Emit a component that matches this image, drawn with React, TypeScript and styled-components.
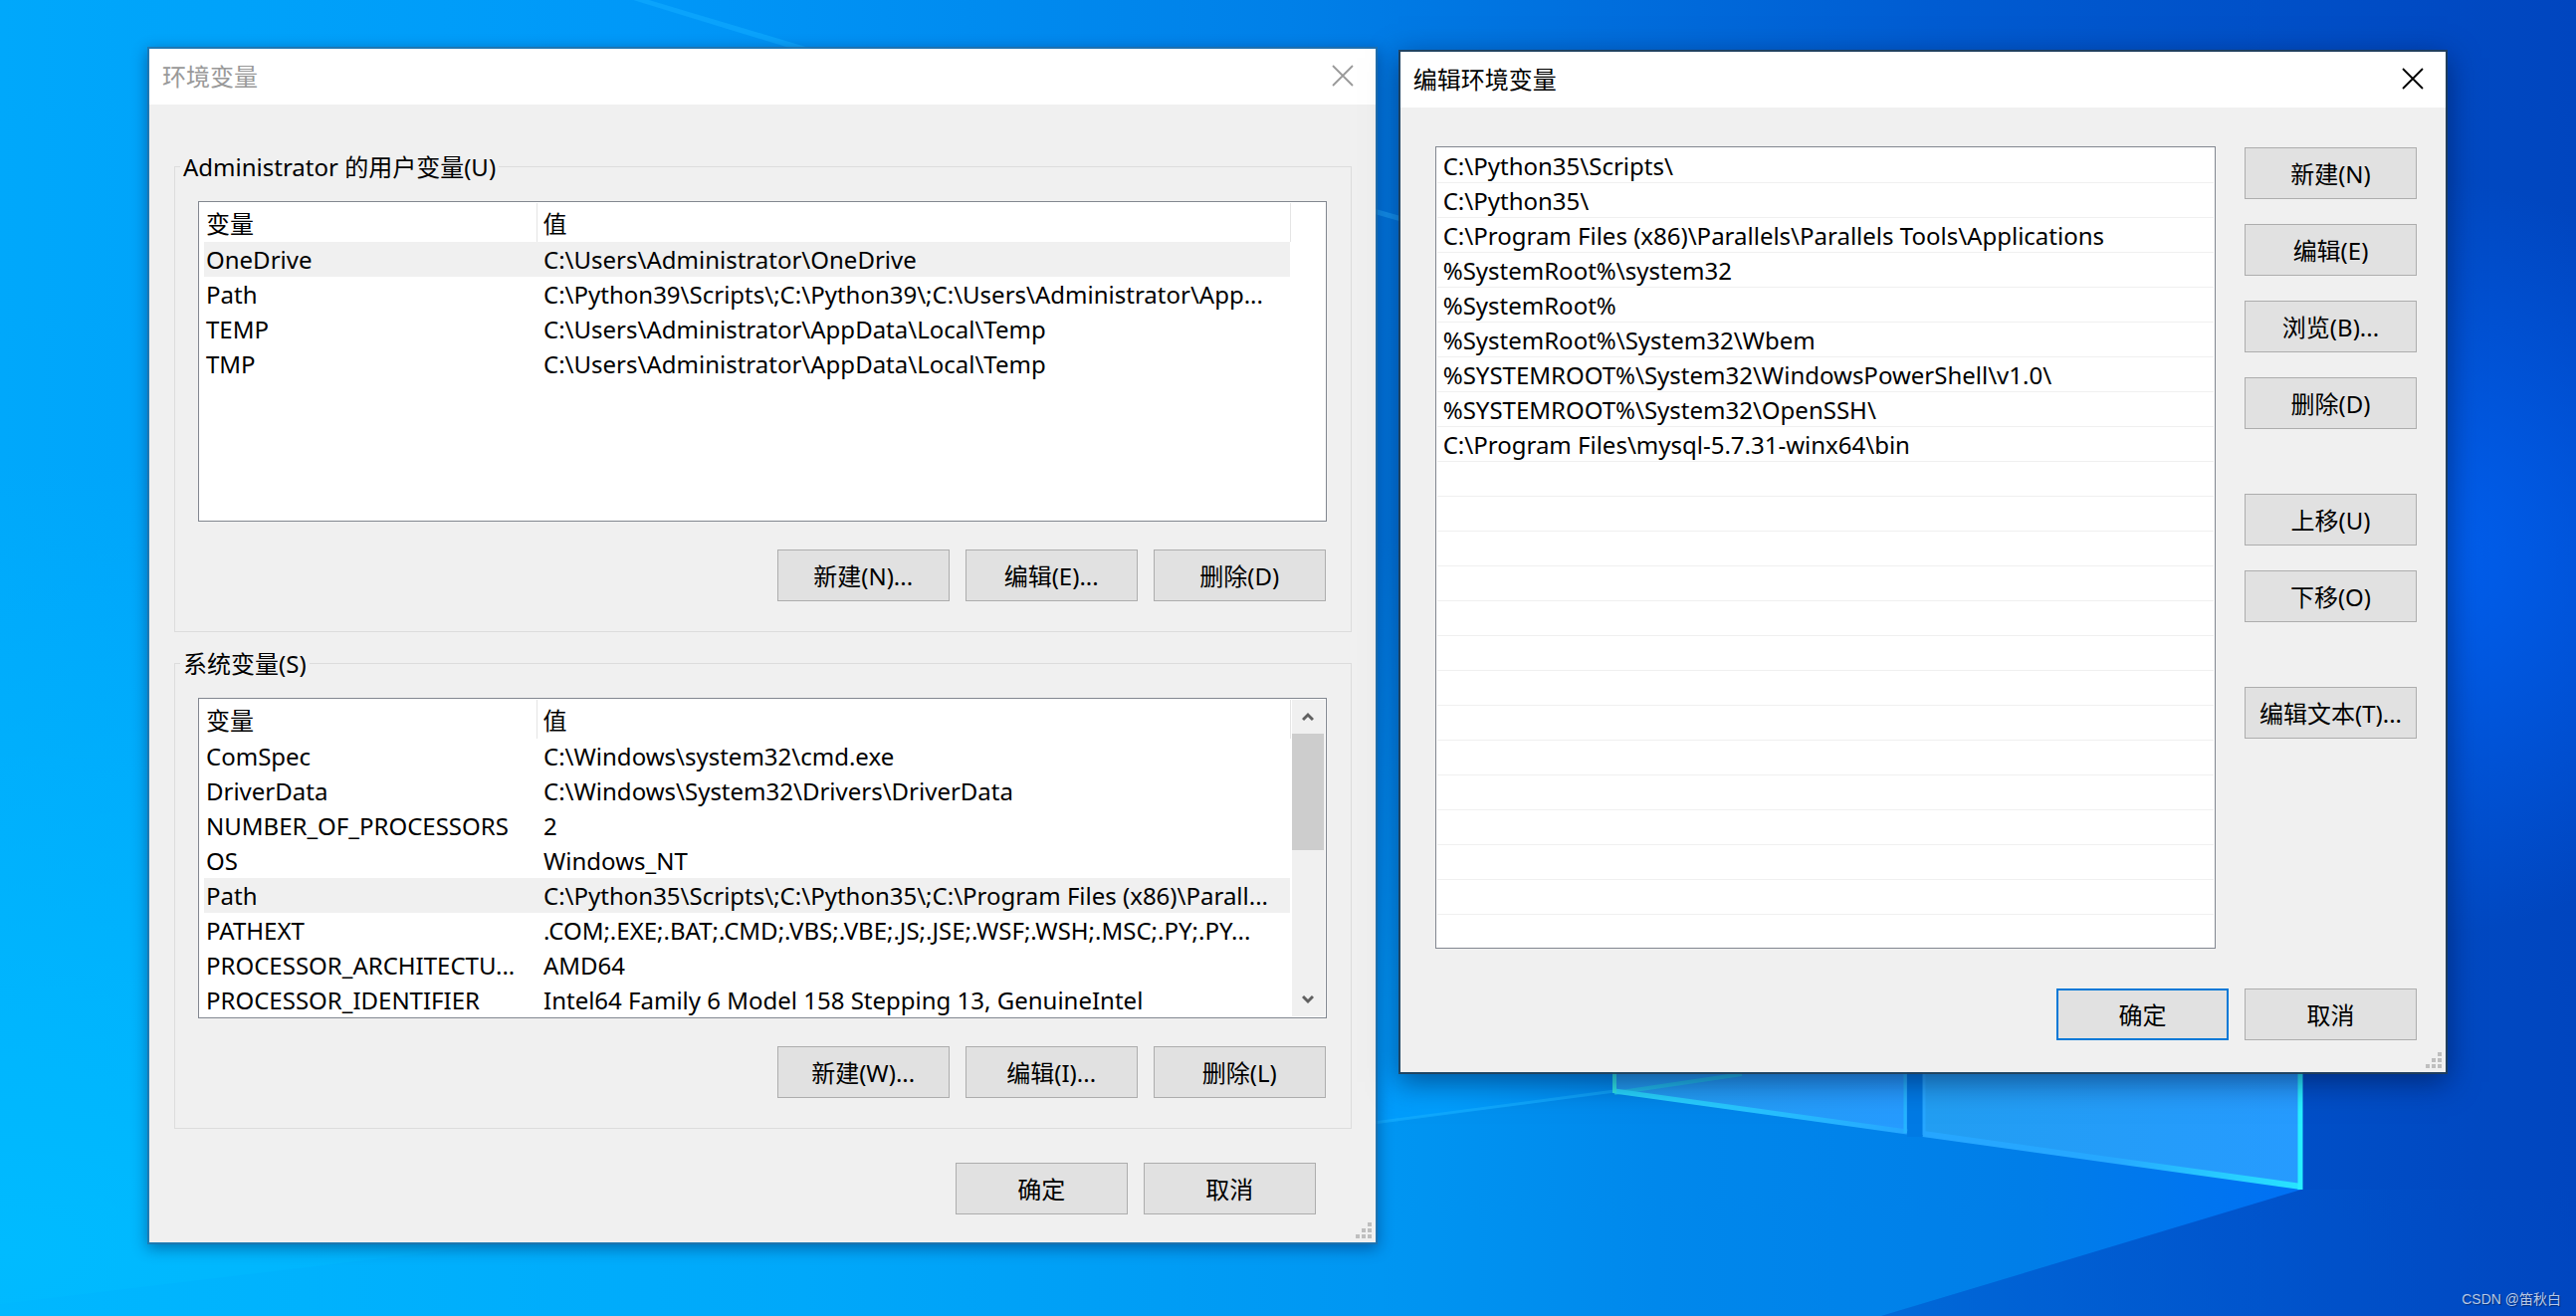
import React from "react";
import styled, { createGlobalStyle, css } from "styled-components";

const GlobalStyle = createGlobalStyle`
  *, *::before, *::after { box-sizing: border-box; }
  body { margin: 0; }
  body, button, table {
    font-family: "Noto Sans", "Noto Sans CJK SC", sans-serif;
    font-size: 24px;
    line-height: 35px;
    color: #000;
  }
`;

const Desktop = styled.main`
  position: relative;
  min-height: 100vh;
  overflow: hidden;
  background: #0078e0;
`;

const Wallpaper = styled.svg`
  position: absolute;
  inset: 0;
  width: 100%;
  height: 100%;
`;

const Windows = styled.div`
  position: relative;
  display: flex;
  align-items: flex-start;
  gap: 21px;
  padding: 47px 129px 0 148px;
`;

const Dialog = styled.section<{ $active?: boolean; $grow: number }>`
  position: relative;
  flex: ${(p) => p.$grow} 1 0;
  min-width: 0;
  border: 2px solid ${(p) => (p.$active ? "rgba(36, 62, 84, 0.9)" : "rgba(42, 110, 160, 0.75)")};
  background: #f0f0f0;
  background-clip: padding-box;
  box-shadow: ${(p) => (p.$active ? "0 8px 28px rgba(0, 10, 50, 0.5)" : "0 4px 14px rgba(0, 20, 70, 0.42)")};
  margin-top: ${(p) => (p.$active ? "3px" : "0")};
`;

const TitleBar = styled.header<{ $active?: boolean }>`
  display: flex;
  align-items: center;
  justify-content: space-between;
  height: 56px;
  padding: 0 22px 2px 13px;
  background: #fff;
  color: ${(p) => (p.$active ? "#000" : "#999")};
`;

const Title = styled.h1`
  margin: 0;
  font-size: 24px;
  font-weight: 400;
`;

const CloseButton = styled.button`
  display: flex;
  padding: 0;
  border: 0;
  background: none;
  color: inherit;
`;

const VariablesBody = styled.div`
  display: flex;
  flex-direction: column;
  gap: 31px;
  padding: 62px 24px 28px 25px;
`;

const Group = styled.fieldset`
  position: relative;
  min-width: 0;
  margin: 0;
  padding: 34px 24px 30px 23px;
  border: 1px solid #dcdcdc;
`;

const Legend = styled.legend`
  position: absolute;
  top: -18px;
  left: 5px;
  padding: 0 3px;
  background: #f0f0f0;
  line-height: 35px;
`;

const ListBox = styled.div`
  display: flex;
  height: 322px;
  padding: 1px 1px 1px 0;
  border: 1px solid #828790;
  background: #fff;
  overflow: hidden;
`;

const Table = styled.table`
  flex: 1;
  min-width: 0;
  height: max-content;
  margin-left: 5px;
  table-layout: fixed;
  border-collapse: collapse;
`;

const HeadCell = styled.th<{ $name?: boolean }>`
  width: ${(p) => (p.$name ? "334px" : "auto")};
  height: 39px;
  padding: 2px 0 0 ${(p) => (p.$name ? "2px" : "6px")};
  border-right: 1px solid #e5e5e5;
  font-weight: 400;
  text-align: left;
`;

const Cell = styled.td<{ $name?: boolean }>`
  height: 35px;
  padding: 0 6px 0 ${(p) => (p.$name ? "2px" : "7px")};
  overflow: hidden;
  text-overflow: ellipsis;
  white-space: nowrap;
`;

const Row = styled.tr<{ $selected?: boolean }>`
  background: ${(p) => (p.$selected ? "#f0f0f0" : "transparent")};
`;

const ScrollTrack = styled.div<{ $visible: boolean }>`
  display: flex;
  flex: 0 0 33px;
  flex-direction: column;
  margin-left: 1px;
  background: ${(p) => (p.$visible ? "#f0f0f0" : "transparent")};
`;

const ScrollArrow = styled.button`
  display: flex;
  align-items: center;
  justify-content: center;
  height: 34px;
  padding: 0;
  border: 0;
  background: none;
  color: #606060;
`;

const ScrollThumb = styled.div`
  height: 117px;
  margin: 0 1px 0 0;
  background: #cdcdcd;
`;

const Spacer = styled.div`
  flex: 1;
`;

const ButtonRow = styled.div<{ $inset?: boolean }>`
  display: flex;
  justify-content: flex-end;
  gap: 16px;
  margin-top: ${(p) => (p.$inset ? "28px" : "3px")};
  padding-right: ${(p) => (p.$inset ? "1px" : "36px")};
`;

const PushButton = styled.button<{ $default?: boolean }>`
  width: 173px;
  height: 52px;
  padding: 0;
  background: #e1e1e1;
  white-space: nowrap;
  ${(p) =>
    p.$default
      ? css`
          border: 2px solid #0078d7;
        `
      : css`
          border: 1px solid #adadad;
        `}
`;

const Grip = styled.svg`
  position: absolute;
  right: 4px;
  bottom: 4px;
`;

const EditBody = styled.div`
  display: grid;
  grid-template-columns: minmax(0, 1fr) 173px;
  column-gap: 29px;
  row-gap: 40px;
  padding: 39px 29px 32px 35px;
`;

const PathList = styled.ul`
  height: 806px;
  margin: 0;
  padding: 1px;
  border: 1px solid #828790;
  background: #fff;
  list-style: none;
  overflow: hidden;
`;

const PathItem = styled.li`
  height: 35px;
  padding-left: 6px;
  border-bottom: 1px solid #f0f0f0;
  white-space: nowrap;
`;

const ActionColumn = styled.div`
  display: flex;
  flex-direction: column;
  gap: 65px;
  padding-top: 1px;
`;

const ActionGroup = styled.div`
  display: flex;
  flex-direction: column;
  gap: 25px;
`;

const EditFooter = styled.footer`
  display: flex;
  grid-column: 1 / -1;
  justify-content: flex-end;
  gap: 16px;
`;

const Watermark = styled.small`
  position: absolute;
  right: 15px;
  bottom: 7px;
  font-family: "Liberation Sans", "Noto Sans CJK SC", sans-serif;
  font-size: 14px;
  line-height: 20px;
  color: rgba(255, 255, 255, 0.72);
  text-shadow: 1px 1px 1px rgba(0, 0, 0, 0.4);
`;

type Variable = { name: string; value: string; selected?: boolean };

const userVariables: Variable[] = [
  { name: "OneDrive", value: "C:\\Users\\Administrator\\OneDrive", selected: true },
  { name: "Path", value: "C:\\Python39\\Scripts\\;C:\\Python39\\;C:\\Users\\Administrator\\App..." },
  { name: "TEMP", value: "C:\\Users\\Administrator\\AppData\\Local\\Temp" },
  { name: "TMP", value: "C:\\Users\\Administrator\\AppData\\Local\\Temp" },
];

const systemVariables: Variable[] = [
  { name: "ComSpec", value: "C:\\Windows\\system32\\cmd.exe" },
  { name: "DriverData", value: "C:\\Windows\\System32\\Drivers\\DriverData" },
  { name: "NUMBER_OF_PROCESSORS", value: "2" },
  { name: "OS", value: "Windows_NT" },
  { name: "Path", value: "C:\\Python35\\Scripts\\;C:\\Python35\\;C:\\Program Files (x86)\\Parall...", selected: true },
  { name: "PATHEXT", value: ".COM;.EXE;.BAT;.CMD;.VBS;.VBE;.JS;.JSE;.WSF;.WSH;.MSC;.PY;.PY..." },
  { name: "PROCESSOR_ARCHITECTU...", value: "AMD64" },
  { name: "PROCESSOR_IDENTIFIER", value: "Intel64 Family 6 Model 158 Stepping 13, GenuineIntel" },
];

const paths = [
  "C:\\Python35\\Scripts\\",
  "C:\\Python35\\",
  "C:\\Program Files (x86)\\Parallels\\Parallels Tools\\Applications",
  "%SystemRoot%\\system32",
  "%SystemRoot%",
  "%SystemRoot%\\System32\\Wbem",
  "%SYSTEMROOT%\\System32\\WindowsPowerShell\\v1.0\\",
  "%SYSTEMROOT%\\System32\\OpenSSH\\",
  "C:\\Program Files\\mysql-5.7.31-winx64\\bin",
];
const visibleLines = 22;

const actionGroups = [
  ["新建(N)", "编辑(E)", "浏览(B)...", "删除(D)"],
  ["上移(U)", "下移(O)"],
  ["编辑文本(T)..."],
];

function CloseIcon() {
  return (
    <svg width="22" height="22" viewBox="0 0 22 22" fill="none" stroke="currentColor" strokeWidth="1.8" aria-hidden>
      <path d="M1 1 L21 21 M21 1 L1 21" />
    </svg>
  );
}

function Chevron({ down }: { down?: boolean }) {
  return (
    <svg width="12" height="10" viewBox="0 0 12 10" fill="none" stroke="currentColor" strokeWidth="3" aria-hidden>
      <path d={down ? "M1 2 L6 7 L11 2" : "M1 8 L6 3 L11 8"} />
    </svg>
  );
}

function SizeGrip() {
  const dots = [[12, 0], [6, 6], [12, 6], [0, 12], [6, 12], [12, 12]];
  return (
    <Grip width="16" height="16" viewBox="0 0 16 16" aria-hidden>
      {dots.map(([x, y]) => (
        <rect key={`${x}-${y}`} x={x} y={y} width="4" height="4" fill="#bfbfbf" />
      ))}
    </Grip>
  );
}

function VariableGroup(props: { legend: string; items: Variable[]; buttons: string[]; scroll?: boolean }) {
  return (
    <Group>
      <Legend>{props.legend}</Legend>
      <ListBox>
        <Table>
          <thead>
            <tr>
              <HeadCell $name>变量</HeadCell>
              <HeadCell>值</HeadCell>
            </tr>
          </thead>
          <tbody>
            {props.items.map((v) => (
              <Row key={v.name} $selected={v.selected}>
                <Cell $name>{v.name}</Cell>
                <Cell>{v.value}</Cell>
              </Row>
            ))}
          </tbody>
        </Table>
        <ScrollTrack $visible={!!props.scroll}>
          {props.scroll && (
            <>
              <ScrollArrow type="button" aria-label="向上滚动"><Chevron /></ScrollArrow>
              <ScrollThumb />
              <Spacer />
              <ScrollArrow type="button" aria-label="向下滚动"><Chevron down /></ScrollArrow>
            </>
          )}
        </ScrollTrack>
      </ListBox>
      <ButtonRow $inset>
        {props.buttons.map((b) => (
          <PushButton key={b} type="button">{b}</PushButton>
        ))}
      </ButtonRow>
    </Group>
  );
}

function Background() {
  return (
    <Wallpaper viewBox="0 0 2588 1322" preserveAspectRatio="none" aria-hidden>
      <defs>
        <linearGradient id="base" x1="0" y1="0" x2="1" y2="0">
          <stop offset="0" stopColor="#00a8fb" />
          <stop offset="0.25" stopColor="#0098f8" />
          <stop offset="0.5" stopColor="#0080e8" />
          <stop offset="0.75" stopColor="#005cd2" />
          <stop offset="1" stopColor="#0045bf" />
        </linearGradient>
        <radialGradient id="cyan" cx="0" cy="0.95" r="0.6">
          <stop offset="0" stopColor="#00bbff" />
          <stop offset="1" stopColor="#00bbff" stopOpacity="0" />
        </radialGradient>
        <radialGradient id="beam" gradientUnits="userSpaceOnUse" cx="1440" cy="1100" r="560">
          <stop offset="0" stopColor="#00a0ff" stopOpacity="0.95" />
          <stop offset="1" stopColor="#00a0ff" stopOpacity="0" />
        </radialGradient>
        <radialGradient id="glow" gradientUnits="userSpaceOnUse" cx="2430" cy="560" r="380">
          <stop offset="0" stopColor="#0064f8" stopOpacity="0.85" />
          <stop offset="1" stopColor="#0064f8" stopOpacity="0" />
        </radialGradient>
        <linearGradient id="floor" gradientUnits="userSpaceOnUse" x1="0" y1="0" x2="2312" y2="0">
          <stop offset="0" stopColor="#00b8ff" />
          <stop offset="0.35" stopColor="#00a8fa" />
          <stop offset="0.6" stopColor="#0096f2" />
          <stop offset="0.72" stopColor="#0088ec" />
          <stop offset="0.88" stopColor="#007ee8" />
          <stop offset="1" stopColor="#0070f4" />
        </linearGradient>
        <linearGradient id="shade" gradientUnits="userSpaceOnUse" x1="1900" y1="1322" x2="2588" y2="1250">
          <stop offset="0" stopColor="#0070dc" />
          <stop offset="0.5" stopColor="#0058d0" />
          <stop offset="1" stopColor="#0046c0" />
        </linearGradient>
        <linearGradient id="pane" x1="0" y1="0" x2="1" y2="0">
          <stop offset="0" stopColor="#229ef2" />
          <stop offset="1" stopColor="#269bff" />
        </linearGradient>
        <linearGradient id="edgeLeft" gradientUnits="userSpaceOnUse" x1="1622" y1="0" x2="1915" y2="0">
          <stop offset="0" stopColor="#28dcff" />
          <stop offset="1" stopColor="#26a6ff" />
        </linearGradient>
        <linearGradient id="edgeRight" gradientUnits="userSpaceOnUse" x1="1932" y1="0" x2="2312" y2="0">
          <stop offset="0" stopColor="#26a6ff" />
          <stop offset="0.5" stopColor="#26a8ff" />
          <stop offset="1" stopColor="#28e4ff" />
        </linearGradient>
      </defs>
      <rect width="2588" height="1322" fill="url(#base)" />
      <rect width="2588" height="1322" fill="url(#cyan)" />
      <rect width="1700" height="1322" fill="url(#beam)" />
      <rect width="2588" height="1322" fill="url(#glow)" />
      <path d="M636 0 H652 L826 52 H806 Z" fill="#10acff" opacity="0.6" />
      <path d="M2312 1195 L1890 1322 H2588 V1195 Z" fill="url(#shade)" opacity="0.6" />
      <path d="M1622 1060 V1098 L1380 1128 L450 1256 L0 1310 V1322 H1890 L2312 1195 V1060 Z" fill="url(#floor)" />
      <path d="M1380 1128 L1622 1096" stroke="#18b0ff" strokeWidth="3" opacity="0.6" />
      <path d="M1380 212 L1408 220" stroke="#20a8ff" strokeWidth="5" opacity="0.6" />
      <path d="M1622 1060 H1916 V1138 L1622 1098 Z" fill="url(#pane)" />
      <path d="M1916 1060 H1932 V1142 H1916 Z" fill="#007ae4" />
      <path d="M1932 1060 H2313 V1194 L1932 1140 Z" fill="url(#pane)" />
      <path d="M1622 1098 L1750 1079" stroke="#20d0e8" strokeWidth="4" opacity="0.6" />
      <path d="M1622 1096 L1916 1137" stroke="url(#edgeLeft)" strokeWidth="5" />
      <path d="M1914 1060 V1138" stroke="#24b4ff" strokeWidth="3" />
      <path d="M1933 1060 V1140" stroke="#26a6ff" strokeWidth="3" />
      <path d="M1932 1139 L2312 1192" stroke="url(#edgeRight)" strokeWidth="6" />
      <path d="M1622 1060 V1098" stroke="#30e8e8" strokeWidth="4" />
      <path d="M2311 1060 V1195" stroke="#28f0ff" strokeWidth="5" />
    </Wallpaper>
  );
}

export default function App() {
  return (
    <Desktop>
      <GlobalStyle />
      <Background />
      <Windows>
        <Dialog $grow={1236}>
          <TitleBar>
            <Title>环境变量</Title>
            <CloseButton type="button" aria-label="关闭"><CloseIcon /></CloseButton>
          </TitleBar>
          <VariablesBody>
            <VariableGroup
              legend="Administrator 的用户变量(U)"
              items={userVariables}
              buttons={["新建(N)...", "编辑(E)...", "删除(D)"]}
            />
            <VariableGroup
              legend="系统变量(S)"
              items={systemVariables}
              buttons={["新建(W)...", "编辑(I)...", "删除(L)"]}
              scroll
            />
            <ButtonRow>
              <PushButton type="button">确定</PushButton>
              <PushButton type="button">取消</PushButton>
            </ButtonRow>
          </VariablesBody>
          <SizeGrip />
        </Dialog>
        <Dialog $active $grow={1054}>
          <TitleBar $active>
            <Title>编辑环境变量</Title>
            <CloseButton type="button" aria-label="关闭"><CloseIcon /></CloseButton>
          </TitleBar>
          <EditBody>
            <PathList>
              {Array.from({ length: visibleLines }, (_, i) => (
                <PathItem key={i}>{paths[i]}</PathItem>
              ))}
            </PathList>
            <ActionColumn>
              {actionGroups.map((group) => (
                <ActionGroup key={group[0]}>
                  {group.map((label) => (
                    <PushButton key={label} type="button">{label}</PushButton>
                  ))}
                </ActionGroup>
              ))}
            </ActionColumn>
            <EditFooter>
              <PushButton type="button" $default>确定</PushButton>
              <PushButton type="button">取消</PushButton>
            </EditFooter>
          </EditBody>
          <SizeGrip />
        </Dialog>
      </Windows>
      <Watermark>CSDN @笛秋白</Watermark>
    </Desktop>
  );
}
